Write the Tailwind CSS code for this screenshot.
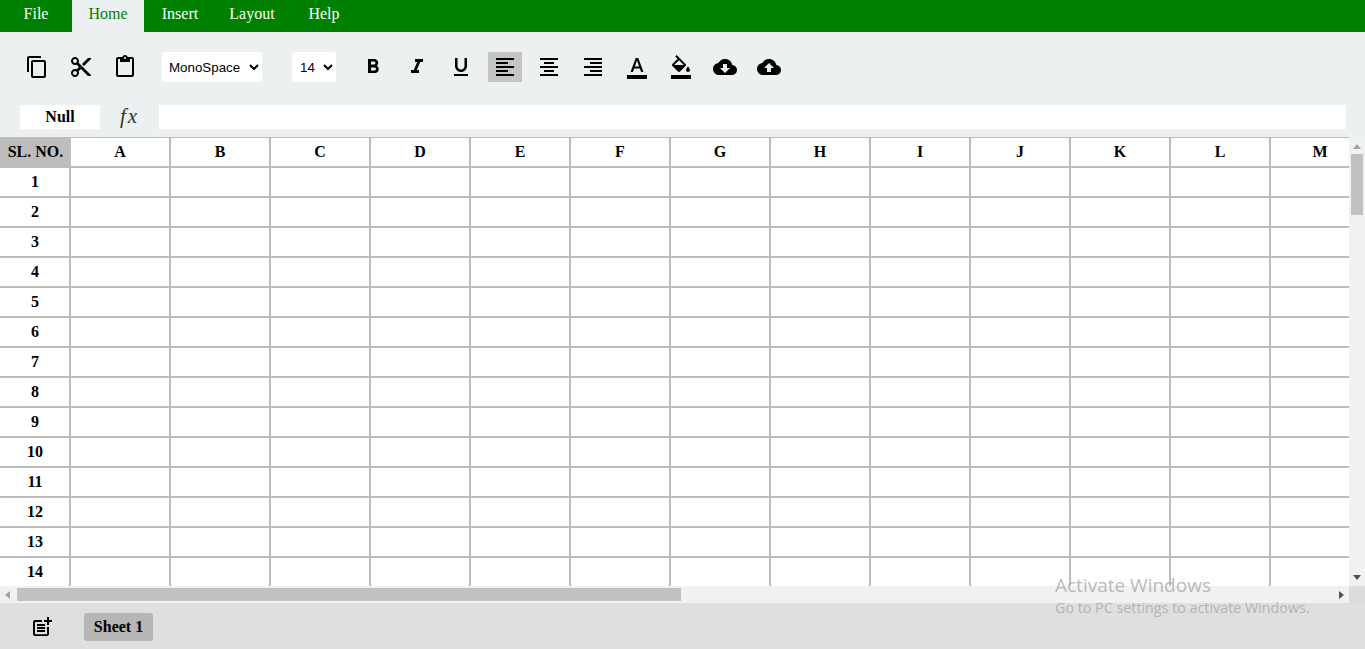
<!DOCTYPE html>
<html lang="en">
<head>
  <meta charset="UTF-8" />
  <title>Spreadsheet</title>
  <script src="https://cdn.jsdelivr.net/npm/@tailwindcss/browser@4"></script>
</head>
<body class="h-[649px] w-[1365px] overflow-hidden bg-[#ecf0f1] font-['Liberation_Serif',serif] text-black relative">

  <!-- Menu -->
  <div class="flex h-8 bg-[#008000] text-white">
    <div class="w-[72px] text-center leading-[27px]">File</div>
    <div class="w-[72px] text-center leading-[27px] bg-[#ecf0f1] text-[#008000]">Home</div>
    <div class="w-[72px] text-center leading-[27px]">Insert</div>
    <div class="w-[72px] text-center leading-[27px]">Layout</div>
    <div class="w-[72px] text-center leading-[27px]">Help</div>
  </div>

  <!-- Toolbar -->
  <div class="flex items-center h-[30px] mt-5 pl-5">
    <div class="flex gap-[10px]">
      <button class="w-[34px] h-[30px] flex items-center justify-center"><svg class="w-6 h-6" viewBox="0 0 24 24"><path d="M16 1H4c-1.1 0-2 .9-2 2v14h2V3h12V1zm3 4H8c-1.1 0-2 .9-2 2v14c0 1.1.9 2 2 2h11c1.1 0 2-.9 2-2V7c0-1.1-.9-2-2-2zm0 16H8V7h11v14z"/></svg></button>
      <button class="w-[34px] h-[30px] flex items-center justify-center"><svg class="w-6 h-6" viewBox="0 0 24 24"><path d="M9.64 7.64c.23-.5.36-1.05.36-1.64 0-2.21-1.79-4-4-4S2 3.79 2 6s1.79 4 4 4c.59 0 1.14-.13 1.64-.36L10 12l-2.36 2.36C7.14 14.13 6.59 14 6 14c-2.21 0-4 1.79-4 4s1.79 4 4 4 4-1.79 4-4c0-.59-.13-1.14-.36-1.64L12 14l7 7h3v-1L9.64 7.64zM6 8c-1.1 0-2-.89-2-2s.9-2 2-2 2 .89 2 2-.9 2-2 2zm0 12c-1.1 0-2-.89-2-2s.9-2 2-2 2 .89 2 2-.9 2-2 2zm6-7.5c-.28 0-.5-.22-.5-.5s.22-.5.5-.5.5.22.5.5-.22.5-.5.5zM19 3l-6 6 2 2 7-7V3z"/></svg></button>
      <button class="w-[34px] h-[30px] flex items-center justify-center"><svg class="w-6 h-6" viewBox="0 0 24 24"><path d="M19 2h-4.18C14.4.84 13.3 0 12 0c-1.3 0-2.4.84-2.82 2H5c-1.1 0-2 .9-2 2v16c0 1.1.9 2 2 2h14c1.1 0 2-.9 2-2V4c0-1.1-.9-2-2-2zm-7 0c.55 0 1 .45 1 1s-.45 1-1 1-1-.45-1-1 .45-1 1-1zm7 18H5V4h2v3h10V4h2v16z"/></svg></button>
    </div>
    <select class="ml-5 w-[100px] h-[30px] bg-white rounded-[3px] pl-[3px] text-[13.33px] font-['Liberation_Sans',sans-serif] outline-none">
      <option>MonoSpace</option>
    </select>
    <select class="ml-[30px] w-[44px] h-[30px] bg-white rounded-[3px] pl-1 text-[13.33px] font-['Liberation_Sans',sans-serif] outline-none">
      <option>14</option>
    </select>
    <div class="flex gap-[10px] ml-5">
      <button class="w-[34px] h-[30px] flex items-center justify-center"><svg class="w-6 h-6" viewBox="0 0 24 24"><path d="M15.6 10.79c.97-.67 1.65-1.77 1.65-2.79 0-2.26-1.75-4-4-4H7v14h7.04c2.09 0 3.71-1.7 3.71-3.79 0-1.52-.86-2.82-2.15-3.42zM10 6.5h3c.83 0 1.5.67 1.5 1.5s-.67 1.5-1.5 1.5h-3v-3zm3.5 9H10v-3h3.5c.83 0 1.5.67 1.5 1.5s-.67 1.5-1.5 1.5z"/></svg></button>
      <button class="w-[34px] h-[30px] flex items-center justify-center"><svg class="w-6 h-6" viewBox="0 0 24 24"><path d="M10 4v3h2.21l-3.42 8H6v3h8v-3h-2.21l3.42-8H18V4z"/></svg></button>
      <button class="w-[34px] h-[30px] flex items-center justify-center"><svg class="w-6 h-6" viewBox="0 0 24 24"><path d="M12 17c3.31 0 6-2.69 6-6V3h-2.5v8c0 1.93-1.57 3.5-3.5 3.5S8.5 12.93 8.5 11V3H6v8c0 3.31 2.69 6 6 6zm-7 2v2h14v-2H5z"/></svg></button>
      <button class="w-[34px] h-[30px] flex items-center justify-center bg-[#c4c4c4]"><svg class="w-6 h-6" viewBox="0 0 24 24"><path d="M15 15H3v2h12v-2zm0-8H3v2h12V7zM3 13h18v-2H3v2zm0 8h18v-2H3v2zM3 3v2h18V3H3z"/></svg></button>
      <button class="w-[34px] h-[30px] flex items-center justify-center"><svg class="w-6 h-6" viewBox="0 0 24 24"><path d="M7 15v2h10v-2H7zm-4 6h18v-2H3v2zm0-8h18v-2H3v2zm4-6v2h10V7H7zM3 3v2h18V3H3z"/></svg></button>
      <button class="w-[34px] h-[30px] flex items-center justify-center"><svg class="w-6 h-6" viewBox="0 0 24 24"><path d="M3 21h18v-2H3v2zm6-4h12v-2H9v2zm-6-4h18v-2H3v2zm6-4h12V7H9v2zM3 3v2h18V3H3z"/></svg></button>
      <button class="w-[34px] h-[30px] flex items-center justify-center"><svg class="w-6 h-6" viewBox="0 0 24 24"><path d="M2 20h20v4H2v-4zm3.49-3h2.42l1.27-3.58h5.65L16.09 17h2.42L13.25 3h-2.5L5.49 17zm4.42-5.61 2.03-5.79h.12l2.03 5.79H9.91z"/></svg></button>
      <button class="w-[34px] h-[30px] flex items-center justify-center"><svg class="w-6 h-6" viewBox="0 0 24 24"><path d="M16.56 8.94L7.62 0 6.21 1.41l2.38 2.38-5.15 5.15c-.59.59-.59 1.54 0 2.12l5.5 5.5c.29.29.68.44 1.06.44s.77-.15 1.06-.44l5.5-5.5c.59-.58.59-1.53 0-2.12zM5.21 10L10 5.21 14.79 10H5.21zM19 11.5s-2 2.17-2 3.5c0 1.1.9 2 2 2s2-.9 2-2c0-1.33-2-3.5-2-3.5zM2 20h20v4H2v-4z"/></svg></button>
      <button class="w-[34px] h-[30px] flex items-center justify-center"><svg class="w-6 h-6" viewBox="0 0 24 24"><path d="M19.35 10.04C18.67 6.59 15.64 4 12 4 9.11 4 6.6 5.64 5.35 8.04 2.34 8.36 0 10.91 0 14c0 3.31 2.69 6 6 6h13c2.76 0 5-2.24 5-5 0-2.64-2.05-4.78-4.65-4.96zM17 13l-5 5-5-5h3V9h4v4h3z"/></svg></button>
      <button class="w-[34px] h-[30px] flex items-center justify-center"><svg class="w-6 h-6" viewBox="0 0 24 24"><path d="M19.35 10.04C18.67 6.59 15.64 4 12 4 9.11 4 6.6 5.64 5.35 8.04 2.34 8.36 0 10.91 0 14c0 3.31 2.69 6 6 6h13c2.76 0 5-2.24 5-5 0-2.64-2.05-4.78-4.65-4.96zM14 13v4h-4v-4H7l5-5 5 5h-3z"/></svg></button>
    </div>
  </div>

  <!-- Formula bar -->
  <div class="flex items-center h-6 mt-[23px] pl-5">
    <div class="w-20 h-6 bg-white text-center font-bold leading-6">Null</div>
    <div class="w-[59px] text-center text-[21px] italic leading-[23px] h-6 tracking-[2px] text-[#333]">fx</div>
    <div class="w-[1187px] h-6 bg-white"></div>
  </div>

  <!-- Grid -->
  <div class="flex mt-2 h-[449px]">
    <div class="w-[1349px] h-full overflow-hidden bg-white border-t border-[#bdbdbd]">
      <table id="sheet" class="border-separate border-spacing-0 table-fixed w-[1371px]"></table>
    </div>
    <div class="w-4 flex flex-col items-center bg-[#f1f1f1]">
      <div class="w-0 h-0 mt-[7px] border-x-4 border-x-transparent border-b-[5px] border-b-[#a3a3a3]"></div>
      <div class="w-3 h-[61px] mt-[5px] bg-[#c1c1c1]"></div>
      <div class="w-0 h-0 mt-auto mb-[6px] border-x-4 border-x-transparent border-t-[5px] border-t-[#505050]"></div>
    </div>
  </div>

  <!-- Horizontal scrollbar -->
  <div class="flex h-[17px]">
    <div class="flex items-center w-[1349px] bg-[#f1f1f1]">
      <div class="w-0 h-0 ml-[5px] border-y-4 border-y-transparent border-r-[5px] border-r-[#a3a3a3]"></div>
      <div class="w-[664px] h-[13px] ml-[7px] bg-[#c1c1c1]"></div>
      <div class="w-0 h-0 ml-auto mr-[5px] border-y-4 border-y-transparent border-l-[5px] border-l-[#505050]"></div>
    </div>
    <div class="w-4 bg-[#dcdcdc]"></div>
  </div>

  <!-- Sheet tabs -->
  <div class="flex items-center h-[46px] pt-[2px] bg-[#dfdfdf]">
    <button class="ml-[30px] w-6 h-6"><svg class="w-6 h-6" viewBox="0 0 24 24"><path d="M17 19.22H5V7h7V5H5c-1.1 0-2 .9-2 2v12c0 1.1.9 2 2 2h12c1.1 0 2-.9 2-2v-7h-2v7.22z"/><path d="M19 2h-2v3h-3c.01.01 0 2 0 2h3v2.99c.01.01 2 0 2 0V7h3V5h-3V2z"/><path d="M7 9h8v2H7zM7 12v2h8v-2h-3zM7 15h8v2H7z"/></svg></button>
    <div class="ml-[30px] w-[69px] h-7 bg-[#b6b6b6] rounded-[3px] text-center font-bold leading-7">Sheet 1</div>
  </div>

  <!-- Activation watermark -->
  <div class="absolute left-[1055px] top-[573px] font-['Open_Sans',sans-serif] text-[#a8a8a8]/80 pointer-events-none">
    <div class="text-[19px] leading-6">Activate Windows</div>
    <div class="text-[14.3px] leading-5 mt-[1px]">Go to PC settings to activate Windows.</div>
  </div>

  <script>
    const letters = 'ABCDEFGHIJKLM'.split('');
    const headCell = 'h-[30px] w-[100px] bg-white border-r-2 border-b-2 border-[#bdbdbd] text-center font-bold p-0';
    const bodyCell = 'h-[30px] w-[100px] bg-white border-r-2 border-b-2 border-[#bdbdbd] p-0';
    const corner = 'h-[30px] w-[71px] bg-[#bdbdbd] border-b-2 border-[#bdbdbd] text-center font-bold p-0';
    const rowHead = 'h-[30px] w-[71px] bg-white border-r-2 border-b-2 border-[#bdbdbd] text-center font-bold p-0 pl-px';
    let html = '<tr><th class="' + corner + '">SL.&nbsp;NO.</th>';
    letters.forEach(l => { html += '<th class="' + headCell + '">' + l + '</th>'; });
    html += '</tr>';
    for (let r = 1; r <= 14; r++) {
      html += '<tr><td class="' + rowHead + '">' + r + '</td>';
      letters.forEach(() => { html += '<td class="' + bodyCell + '"></td>'; });
      html += '</tr>';
    }
    document.getElementById('sheet').innerHTML = html;
  </script>
</body>
</html>
